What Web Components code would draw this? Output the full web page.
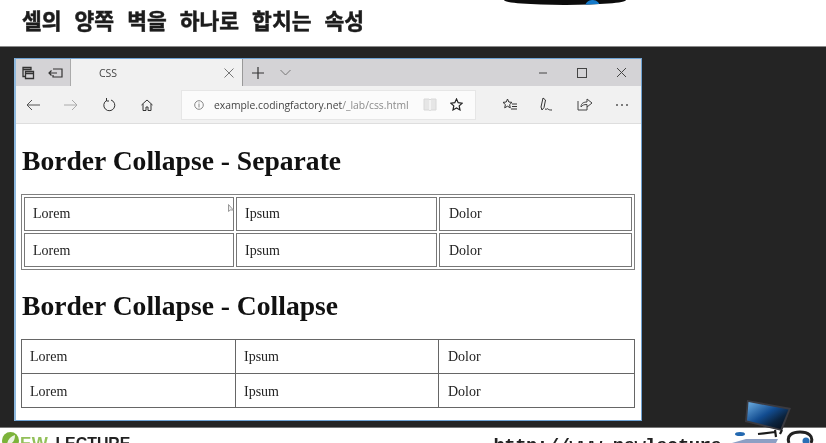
<!DOCTYPE html>
<html lang="ko"><head><meta charset="utf-8"><title>Border Collapse</title>
<style>
html,body{margin:0;padding:0;height:443px;overflow:hidden;background:#fff}
</style></head><body>
<slide-page>
  <span slot="title">셀의 양쪽 벽을 하나로 합치는 속성</span>
  <browser-window>
    <h-title>Border Collapse - Separate</h-title>
    <demo-table mode="separate"></demo-table>
    <h-title class="b">Border Collapse - Collapse</h-title>
    <demo-table mode="collapse"></demo-table>
  </browser-window>
</slide-page>
<script>
const S='fill="none" stroke="#444" stroke-width="1"';
class SlidePage extends HTMLElement{constructor(){super();this.attachShadow({mode:'open'}).innerHTML=`
<style>
:host{display:flex;flex-direction:column;width:826px;height:443px;position:relative;overflow:hidden;background:#fff}
.title{height:46px;box-sizing:border-box;padding:5px 0 0 22px;font:700 21.5px/30px "Noto Sans CJK KR",sans-serif;color:#1c1c1c;word-spacing:7px;-webkit-text-stroke:.5px #1c1c1c;filter:blur(.4px);white-space:nowrap}
.panel{height:382px;box-sizing:border-box;background:#242424;border-top:1px solid #8a8a8a;border-bottom:1px solid #777;padding:11px 0 0 14px}
.foot{flex:1;display:flex;align-items:flex-start;font-family:"Liberation Sans",sans-serif;font-weight:700;filter:blur(.4px);overflow:hidden}
.logo{margin:4px 0 0 2px;flex:none;display:block}
.ew{color:#93c05a;font-size:17px;line-height:17px;margin:7px 0 0 1px;letter-spacing:.5px}
.lec{color:#222;font-size:15.900px;line-height:16px;margin:8px 0 0 7px}
.url{margin:9px 0 0 363px;font:700 19px/19px "Liberation Mono",monospace;color:#222;letter-spacing:-.55px;white-space:nowrap}
.top{position:absolute;left:504px;top:0;width:122px;height:5px;background:#0c0c0c;border-radius:0 0 60px 60px/0 0 5px 5px;overflow:hidden}
.top i{position:absolute;left:81px;top:0;width:15px;height:7px;background:#1479c9;border-radius:7px 7px 0 0}
.mon{position:absolute;left:730px;top:396px}
</style>
<div class="top"><i></i></div>
<div class="title"><slot name="title"></slot></div>
<div class="panel"><slot></slot></div>
<div class="foot"><svg class="logo" width="17" height="17" viewBox="0 0 17 17"><circle cx="8.500" cy="8.500" r="8.500" fill="#7cb33a"/><path d="M5 14C5 8 8 5 13 3c0 5-2 8-5 9" fill="#fff" opacity=".85"/></svg><span class="ew">EW</span><span class="lec">LECTURE</span><span class="url">http://www.newlecture</span></div>
<svg class="mon" width="96" height="47" viewBox="0 0 96 47">
<defs><linearGradient id="g" x1="0" y1="0" x2="1" y2="1"><stop offset="0" stop-color="#6fb0e4"/><stop offset=".45" stop-color="#124c90"/><stop offset=".7" stop-color="#0b2440"/><stop offset="1" stop-color="#050a12"/></linearGradient></defs>
<path d="M17 4 L61 12 L52 35 L15 26Z" fill="#3a3a40"/><path d="M18.500 6 L58.500 13.500 L50.500 33 L17 24.500Z" fill="url(#g)"/>
<path d="M45 34 L46 41 M45 36 L28 38 M52 34 L50 38" stroke="#1a1a1a" stroke-width="2.200" fill="none"/>
<path d="M16 43 L48 43 L46 47 L2 47Z" fill="#8d9fc4"/><ellipse cx="10" cy="38" rx="5" ry="2" fill="#2268b0"/>
<path d="M59 47 C56 39 63 36 70 36 C78 36 84 40 81 47" fill="none" stroke="#222" stroke-width="3"/><circle cx="76" cy="45" r="3.500" fill="#2a6fb5"/>
</svg>`}}
class BrowserWindow extends HTMLElement{constructor(){super();this.attachShadow({mode:'open'}).innerHTML=`
<style>
:host{display:flex;flex-direction:column;width:628px;height:363px;box-sizing:border-box;border:1px solid #6fa3d4;border-left:2px solid #8fb9de;background:#fff;color:#111}
svg{display:block;flex:none}
.tabs{height:27px;background:#d4d3d6;display:flex;align-items:center;flex:none;font:11px "Open Sans",sans-serif;filter:blur(.3px)}
.l{width:54px;display:flex;gap:13px;padding-left:5px;box-sizing:border-box;flex:none}
.tab{width:173px;height:27px;background:#f1f1f1;display:flex;align-items:center;justify-content:space-between;box-sizing:border-box;padding:0 7px 0 28px;border-left:1px solid #aaa;border-right:1px solid #999;color:#444;flex:none;font-size:10.500px}
.new{display:flex;gap:16px;margin-left:9px;align-items:center}
.win{margin-left:auto;display:flex;gap:29px;padding-right:14px;align-items:center}
.bar{height:38px;background:#f1f1f1;border-bottom:1px solid #dedede;box-sizing:border-box;display:flex;align-items:center;flex:none;filter:blur(.3px)}
.nav{display:flex;gap:22px;padding-left:10px;width:165px;box-sizing:border-box;flex:none;align-items:center}
.addr{width:295px;height:30px;background:#fbfbfb;border:1px solid #e6e6e6;box-sizing:border-box;display:flex;align-items:center;padding:0 12px 0 12px;font:10.350px "Open Sans",sans-serif;color:#444;flex:none;white-space:nowrap}
.addr b{font-weight:400;color:#8b8b8b}
.addr .i{margin-right:10px}
.addr .r{margin-left:auto;display:flex;gap:13px;align-items:center}
.tools{display:flex;gap:21px;margin-left:26px;align-items:center}
.c{flex:1;padding:0 0 0 5px;overflow:hidden;filter:blur(.4px)}
</style>
<div class="tabs">
 <div class="l">
  <svg width="14" height="14" viewBox="0 0 14 14"><path d="M2 1.500h8v2h-8zM2 3.500v7h2M4.500 5.500h8v7h-8zM4.500 5.500h8v2h-8z" fill="none" stroke="#333" stroke-width="1.300"/></svg>
  <svg width="16" height="14" viewBox="0 0 16 14"><path d="M5 3h9v8H5V9M1 7h8M3.500 4.500 1 7l2.500 2.500" fill="none" stroke="#333" stroke-width="1.200"/></svg>
 </div>
 <div class="tab"><span>CSS</span><svg width="12" height="12" viewBox="0 0 12 12"><path d="M1.500 1.500l9 9M10.500 1.500l-9 9" fill="none" stroke="#777"/></svg></div>
 <div class="new"><svg width="12" height="12" viewBox="0 0 12 12"><path d="M6 0v12M0 6h12" fill="none" stroke="#333" stroke-width="1.200"/></svg><svg width="11" height="7" viewBox="0 0 11 7"><path d="M.5 1l5 5 5-5" fill="none" stroke="#777"/></svg></div>
 <div class="win">
  <svg width="10" height="10" viewBox="0 0 10 10"><path d="M1 5h8" ${S}/></svg>
  <svg width="10" height="10" viewBox="0 0 10 10"><rect x=".500" y=".500" width="9" height="9" ${S}/></svg>
  <svg width="11" height="11" viewBox="0 0 11 11"><path d="M1 1l9 9M10 1l-9 9" ${S}/></svg>
 </div>
</div>
<div class="bar">
 <div class="nav">
  <svg width="14" height="12" viewBox="0 0 14 12"><path d="M14 6H1M6 1L1 6l5 5" fill="none" stroke="#555"/></svg>
  <svg width="14" height="12" viewBox="0 0 14 12" style="margin-left:2px"><path d="M0 6h13M8 1l5 5-5 5" fill="none" stroke="#aaa"/></svg>
  <svg width="14" height="14" viewBox="0 0 14 14" style="margin-left:2px"><path d="M4.500 2.500A5.500 5.500 0 1 0 9 2M4.500 0v3H7" fill="none" stroke="#333"/></svg>
  <svg width="12" height="12" viewBox="0 0 12 12" style="margin-left:3px"><path d="M.5 6L6 1l5.500 5M2 5v6.500h3V8h2v3.500h3V5" fill="none" stroke="#333"/></svg>
 </div>
 <div class="addr">
  <svg class="i" width="10" height="10" viewBox="0 0 10 10"><circle cx="5" cy="5" r="4.300" fill="none" stroke="#888"/><path d="M5 4v3.500M5 2.500v1" stroke="#888"/></svg>
  <span>example.codingfactory.net<b>/_lab/css.html</b></span>
  <div class="r">
   <svg width="14" height="13" viewBox="0 0 14 13"><path d="M1 1h5l1 1 1-1h5v11H8l-1 .500L6 12H1z" fill="#e6e6e6" stroke="#d8d8d8"/><path d="M7 2v10" stroke="#fff"/></svg>
   <svg width="13" height="13" viewBox="0 0 13 13"><path d="M6.500 1l1.700 3.700 4 .500-3 2.700.800 4-3.500-2-3.500 2 .800-4-3-2.700 4-.500z" fill="none" stroke="#222" stroke-width="1.200"/></svg>
  </div>
 </div>
 <div class="tools">
  <svg width="15" height="13" viewBox="0 0 15 13"><path d="M5.500 1l1.300 3 3.200.400-2.400 2.200.700 3.200-2.800-1.600-2.800 1.600.700-3.200L1 4.400l3.200-.400zM10 6h5M10 8.500h5M9 11h6" fill="none" stroke="#333"/></svg>
  <svg width="15" height="15" viewBox="0 0 15 15" style="margin-left:1px"><path d="M4 1L2 10l1 3 2-2.500L6.500 3zM6 12c2 1 2-1 3 0s2 1 4 1" fill="none" stroke="#333"/></svg>
  <svg width="15" height="13" viewBox="0 0 15 13" style="margin-left:2px"><path d="M1 3v9h9V9M4 9c0-4 3-5 6-5V1l5 4-5 4V6.500C7 6.500 5.500 7 4 9z" fill="none" stroke="#444"/></svg>
  <svg width="14" height="4" viewBox="0 0 14 4" style="margin-left:2px"><circle cx="2" cy="2" r="1" fill="#555"/><circle cx="7" cy="2" r="1" fill="#555"/><circle cx="12" cy="2" r="1" fill="#555"/></svg>
 </div>
</div>
<div class="c"><slot></slot></div>`}}
class HTitle extends HTMLElement{constructor(){super();this.attachShadow({mode:'open'}).innerHTML=`
<style>:host{display:block;font:700 27.600px/32px "Liberation Serif",serif;color:#111;margin:21px 0 17px 1px;white-space:nowrap}
:host(.b){margin:20px 0 17px 1px}</style><slot></slot>`}}
class DemoTable extends HTMLElement{constructor(){super();const sep=this.getAttribute('mode')==='separate';
const row='<tr><td>Lorem</td><td>Ipsum</td><td>Dolor</td></tr>';
this.attachShadow({mode:'open'}).innerHTML=`
<style>
:host{display:block;position:relative}
table{width:614px;table-layout:fixed;font:14px/16px "Liberation Serif",serif;color:#222;${sep?'border-collapse:separate;border-spacing:2px;border:1px solid #808080;height:76px':'border-collapse:collapse;border:1px solid #666;height:69px'}}
td{border:1px solid ${sep?'#777':'#666'};padding:0 0 0 8px;height:${sep?32:33}px;box-sizing:border-box}
td:nth-child(3){padding-left:9px}
tr+tr td{padding-top:2px}
col.a{width:${sep?210:214}px}col.b{width:${sep?201:203}px}
.cur{position:absolute;left:207px;top:10px}
</style>
<table><colgroup><col class="a"><col class="b"><col></colgroup><tbody>${row}${row}</tbody></table>${sep?'<svg class="cur" width="6" height="9" viewBox="0 0 6 9"><path d="M.5.5v7l1.800-1.500h3z" fill="#eee" stroke="#999"/></svg>':''}`}}
customElements.define('slide-page',SlidePage);
customElements.define('browser-window',BrowserWindow);
customElements.define('h-title',HTitle);
customElements.define('demo-table',DemoTable);
</script>
</body></html>
